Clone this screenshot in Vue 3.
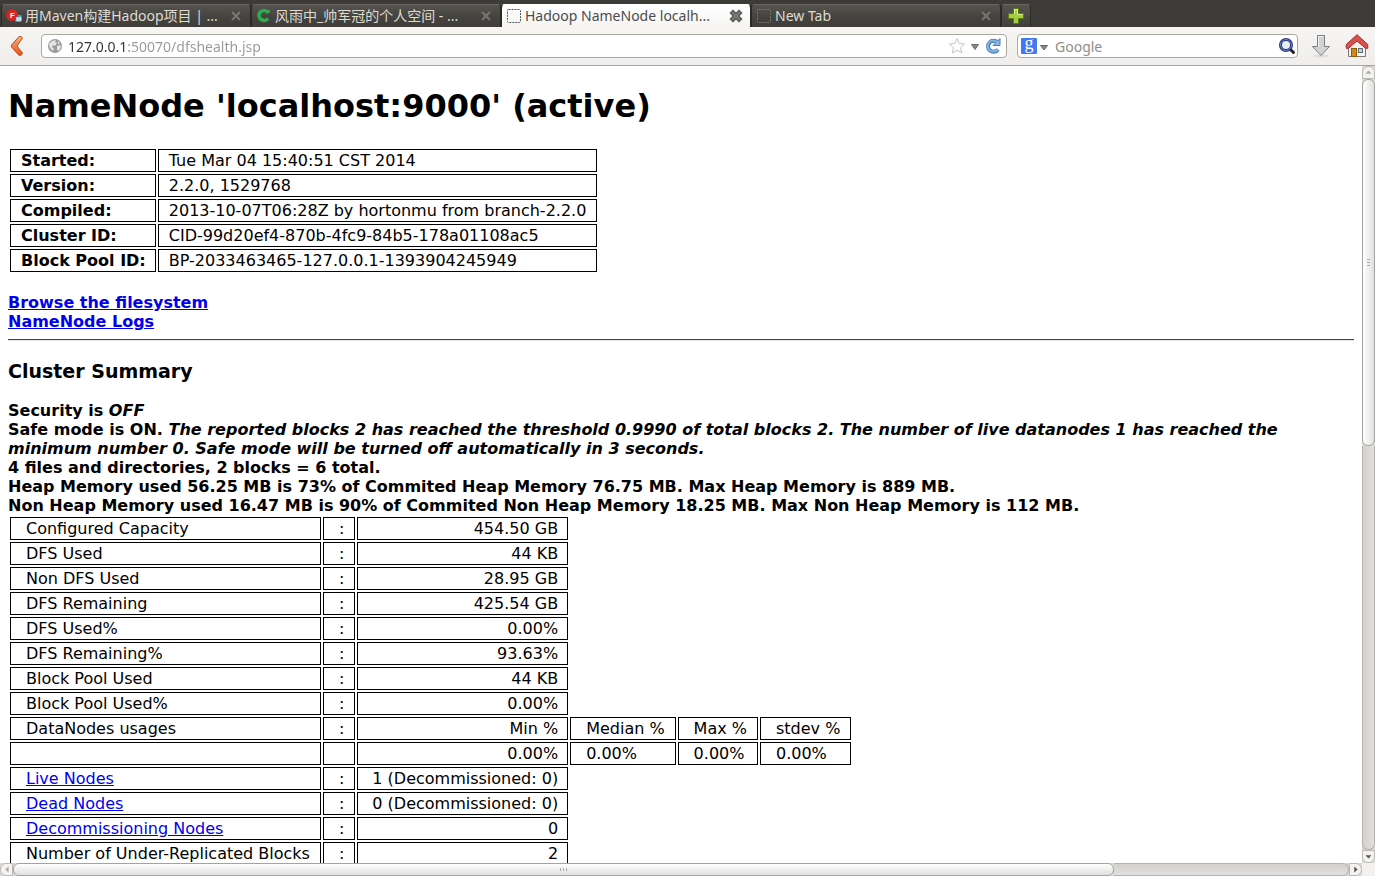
<script setup>
import { ref } from 'vue'

const tabs = [
  { title: '用Maven构建Hadoop项目 | ...', icon: 'fm' },
  { title: '风雨中_帅军冠的个人空间 - ...', icon: 'c' },
  { title: 'Hadoop NameNode localh...', icon: 'blank', active: true },
  { title: 'New Tab', icon: 'blank' }
]

const url = ref('127.0.0.1:50070/dfshealth.jsp')
const query = ref('')

const info = [
  ['Started:', 'Tue Mar 04 15:40:51 CST 2014'],
  ['Version:', '2.2.0, 1529768'],
  ['Compiled:', '2013-10-07T06:28Z by hortonmu from branch-2.2.0'],
  ['Cluster ID:', 'CID-99d20ef4-870b-4fc9-84b5-178a01108ac5'],
  ['Block Pool ID:', 'BP-2033463465-127.0.0.1-1393904245949']
]

const rows = [
  { name: 'Configured Capacity', sep: ':', value: '454.50 GB' },
  { name: 'DFS Used', sep: ':', value: '44 KB' },
  { name: 'Non DFS Used', sep: ':', value: '28.95 GB' },
  { name: 'DFS Remaining', sep: ':', value: '425.54 GB' },
  { name: 'DFS Used%', sep: ':', value: '0.00%' },
  { name: 'DFS Remaining%', sep: ':', value: '93.63%' },
  { name: 'Block Pool Used', sep: ':', value: '44 KB' },
  { name: 'Block Pool Used%', sep: ':', value: '0.00%' },
  { name: 'DataNodes usages', sep: ':', value: 'Min %', extra: ['Median %', 'Max %', 'stdev %'] },
  { name: '', sep: '', value: '0.00%', extra: ['0.00%', '0.00%', '0.00%'] },
  { name: 'Live Nodes', sep: ':', value: '1 (Decommissioned: 0)', link: true },
  { name: 'Dead Nodes', sep: ':', value: '0 (Decommissioned: 0)', link: true },
  { name: 'Decommissioning Nodes', sep: ':', value: '0', link: true },
  { name: 'Number of Under-Replicated Blocks', sep: ':', value: '2' }
]
</script>

<template>
  <div class="browser">
    <nav class="tabbar" aria-label="Tabs">
      <div v-for="tab in tabs" :key="tab.title" class="tab" :class="{ active: tab.active }">
        <svg v-if="tab.icon === 'fm'" class="favicon" viewBox="0 0 16 16" aria-hidden="true">
          <rect x="9" y="7" width="7" height="7" rx="2" fill="#4aa3d8" />
          <circle cx="6" cy="7" r="6" fill="#d3261c" />
          <text x="4" y="10" class="mark-f">F</text>
          <text x="10" y="13" class="mark-m">M</text>
        </svg>
        <svg v-else-if="tab.icon === 'c'" class="favicon" viewBox="0 0 16 16" aria-hidden="true">
          <path d="M12 4.500A5 5 0 1 0 12 10.500" fill="none" stroke="#2faa4e" stroke-width="3.600" />
          <path d="M10 6.200L14 4.500V2L11.500 2.500Z" fill="#2faa4e" />
        </svg>
        <svg v-else class="favicon" viewBox="0 0 16 16" aria-hidden="true">
          <rect x="1.5" y="1.5" width="13" height="13" rx="1" fill="none" :stroke="tab.active ? '#555' : '#77756f'" stroke-dasharray="2 1" />
        </svg>
        <button class="title" type="button">{{ tab.title }}</button>
        <button class="close" type="button" aria-label="Close tab">
          <svg viewBox="0 0 14 14" aria-hidden="true">
            <path v-if="tab.active" d="M4 4l6 6M10 4l-6 6" stroke="#4f4e4b" stroke-width="5" stroke-linecap="square" />
            <path v-if="tab.active" d="M4 4l6 6M10 4l-6 6" stroke="#777672" stroke-width="3" stroke-linecap="square" />
            <path v-else d="M3 3l8 8M11 3l-8 8" stroke="#777670" stroke-width="2" />
          </svg>
        </button>
      </div>
      <button class="newtab" type="button" aria-label="Open a new tab">
        <svg viewBox="0 0 16 16" aria-hidden="true">
          <path d="M5.5 .5h5v5h5v5h-5v5h-5v-5h-5v-5h5z" fill="#a5cc3c" stroke="#567f10" />
          <path d="M6.5 6.5v-5h3v5h5" fill="none" stroke="#d9ee8c" />
        </svg>
      </button>
    </nav>

    <header class="toolbar">
      <button class="tool back" type="button" aria-label="Back">
        <svg width="14" height="22" viewBox="0 0 14 22" aria-hidden="true">
          <defs>
            <linearGradient id="backFill" x1="0" y1="0" x2="0" y2="1">
              <stop offset="0" stop-color="#f8b27c" />
              <stop offset="1" stop-color="#e4511c" />
            </linearGradient>
          </defs>
          <path d="M9 1.5Q12 1 12.5 3L7 11L12.500 18Q12 21 9 20.500L1.500 12V10Z" fill="url(#backFill)" stroke="#c9501e" />
        </svg>
      </button>
      <div class="field address">
        <svg width="16" height="16" viewBox="0 0 16 16" aria-hidden="true">
          <circle cx="8" cy="8" r="7" fill="#999" />
          <path d="M2 6l3-3 4-1-1 2 2 1-2 3-2-1-1 2 2 2-1 2-3-3zM10 8l3-1 1 2-2 4-2-1zM11 3l2 2-2 1z" fill="#e6e6e6" />
        </svg>
        <input v-model="url" class="url" type="text" aria-label="Address" spellcheck="false" />
        <button class="bare" type="button" aria-label="Bookmark this page">
          <svg width="18" height="18" viewBox="0 0 18 18" aria-hidden="true">
            <path d="M9 1.500L11.200 6.500L16.500 7L12.500 10.700L13.700 16L9 13.200L4.300 16L5.500 10.700L1.500 7L6.800 6.500Z" fill="#fff" stroke="#c4c4c4" />
          </svg>
        </button>
        <button class="bare" type="button" aria-label="Show history">
          <svg width="18" height="18" viewBox="0 0 18 18" aria-hidden="true">
            <path d="M5.500 7.500h7L9 12.500z" fill="#888" stroke="#6a6a6a" />
          </svg>
        </button>
        <button class="bare" type="button" aria-label="Reload">
          <svg width="18" height="18" viewBox="0 0 18 18" aria-hidden="true">
            <path d="M13.500 5.500A5.500 5.500 0 1 0 14 12.500" fill="none" stroke="#4a7fb8" stroke-width="4" />
            <path d="M16 1.500V8.500H9Z" fill="#8db7e0" stroke="#4a7fb8" />
            <path d="M13.500 5.500A5.500 5.500 0 1 0 13.500 12.500" fill="none" stroke="#86b3df" stroke-width="2" />
          </svg>
        </button>
      </div>
      <form class="field search" @submit.prevent>
        <svg width="16" height="16" viewBox="0 0 16 16" aria-hidden="true">
          <rect width="16" height="16" rx="1" fill="#4277f5" />
          <text x="8" y="11" class="mark-g">g</text>
        </svg>
        <button class="engine" type="button" aria-label="Choose search engine">
          <svg width="10" height="16" viewBox="0 0 10 16" aria-hidden="true">
            <path d="M1.500 7.500h7L5 12z" fill="#888" stroke="#666" />
          </svg>
        </button>
        <input v-model="query" class="query" type="text" placeholder="Google" aria-label="Search" />
        <button class="bare" type="submit" aria-label="Search">
          <svg width="18" height="18" viewBox="0 0 18 18" aria-hidden="true">
            <path d="M12.500 12.500l3 3" stroke="#222" stroke-width="3" stroke-linecap="round" />
            <circle cx="8" cy="8" r="5.500" fill="#e8edf6" stroke="#26357a" stroke-width="3" />
            <circle cx="8" cy="8" r="5.500" fill="none" stroke="#6a82c8" />
          </svg>
        </button>
      </form>
      <button class="tool" type="button" aria-label="Downloads">
        <svg width="20" height="24" viewBox="0 0 20 24" aria-hidden="true">
          <ellipse cx="10" cy="22" rx="8" ry="1.500" fill="#dedddb" />
          <path d="M6.500 1.500h7v11h5L10 21.500L1.500 12.500h5z" fill="#cfd3d4" stroke="#7d807f" />
          <path d="M7.500 13V2.500h5" fill="none" stroke="#f1f3f3" />
        </svg>
      </button>
      <button class="tool" type="button" aria-label="Home">
        <svg width="24" height="24" viewBox="0 0 24 24" aria-hidden="true">
          <path d="M3.500 12L12 4.500L20.500 12V22.500H3.500Z" fill="#f3f2ef" stroke="#777" />
          <rect x="6.500" y="14.500" width="5" height="8" fill="#d18a1c" stroke="#8f5a08" />
          <rect x="13.500" y="14.500" width="4" height="4" fill="#bfd3dc" stroke="#5e7076" />
          <path d="M12 .700L22.800 10.500V14.300H20.500L12 7L3.500 14.300H1.200V10.500Z" fill="#d75050" stroke="#a92d2d" />
        </svg>
      </button>
    </header>

    <div class="viewport">
      <main class="page">
        <h1>NameNode 'localhost:9000' (active)</h1>
        <table class="info">
          <tbody>
            <tr v-for="row in info" :key="row[0]">
              <th scope="row">{{ row[0] }}</th>
              <td>{{ row[1] }}</td>
            </tr>
          </tbody>
        </table>
        <div class="links">
          <a href="#browse">Browse the filesystem</a><br />
          <a href="#logs">NameNode Logs</a>
        </div>
        <hr />
        <h3>Cluster Summary</h3>
        <div class="summary">
          Security is <em>OFF</em><br />
          Safe mode is ON. <em>The reported blocks 2 has reached the threshold 0.9990 of total blocks 2. The number of live datanodes 1 has reached the minimum number 0. Safe mode will be turned off automatically in 3 seconds.</em><br />
          4 files and directories, 2 blocks = 6 total.<br />
          Heap Memory used 56.25 MB is 73% of Commited Heap Memory 76.75 MB. Max Heap Memory is 889 MB.<br />
          Non Heap Memory used 16.47 MB is 90% of Commited Non Heap Memory 18.25 MB. Max Non Heap Memory is 112 MB.
        </div>
        <table class="stats">
          <tbody>
            <tr v-for="(row, i) in rows" :key="i">
              <td><a v-if="row.link" href="#nodes">{{ row.name }}</a><template v-else>{{ row.name }}</template></td>
              <td>{{ row.sep }}</td>
              <td class="value">{{ row.value }}</td>
              <td v-for="(cell, j) in row.extra || []" :key="j">{{ cell }}</td>
            </tr>
          </tbody>
        </table>
      </main>

      <div class="bar vertical" aria-hidden="true">
        <span class="arrow"><svg viewBox="0 0 13 13"><path d="M3 8h7L6.500 4z" fill="#aaa" /></svg></span>
        <span class="thumb"><i></i><i></i><i></i></span>
        <span class="rest"></span>
        <span class="arrow"><svg viewBox="0 0 13 13"><path d="M3 5h7L6.500 9z" fill="#555" /></svg></span>
      </div>
      <div class="bar horizontal" aria-hidden="true">
        <span class="arrow"><svg viewBox="0 0 13 13"><path d="M9 3v7L5 6.500z" fill="#aaa" /></svg></span>
        <span class="thumb"><i></i><i></i><i></i></span>
        <span class="rest"></span>
        <span class="arrow"><svg viewBox="0 0 13 13"><path d="M5 3v7L9 6.500z" fill="#555" /></svg></span>
      </div>
    </div>
  </div>
</template>

<style>
body {
  margin: 0;
  overflow: hidden;
}
</style>

<style scoped>
.browser {
  display: flex;
  flex-direction: column;
  height: 100vh;
  background: #fff;
  font-family: "Noto Sans", "Noto Sans CJK SC", sans-serif;
  font-size: 14px;
}
button {
  border: 0;
  padding: 0;
  background: none;
  font: inherit;
  color: inherit;
}
svg {
  display: block;
  flex: none;
}

.tabbar {
  display: flex;
  align-items: flex-end;
  box-sizing: border-box;
  height: 27px;
  flex: none;
  padding-left: 1px;
  background: #3c3b37;
}
.tab {
  display: flex;
  align-items: center;
  box-sizing: border-box;
  flex: 0 1 250px;
  min-width: 0;
  height: 23px;
  padding: 0 7px 0 4px;
  border: 1px solid #2b2a27;
  border-top-color: #686762;
  border-bottom: 0;
  border-radius: 4px 4px 0 0;
  background: linear-gradient(#55544f, #454440 50%, #3f3e3a);
  color: #dfdbd2;
}
.tab.active {
  background: linear-gradient(#fff, #f5f4f3);
  border-top-color: #fff;
  color: #4c4c4c;
}
.favicon {
  width: 16px;
  height: 16px;
}
.mark-f {
  font: bold 8px "Liberation Sans", sans-serif;
  fill: #fff;
}
.mark-m {
  font: bold 6px "Liberation Sans", sans-serif;
  fill: #fff;
}
.mark-g {
  font: 18px "Liberation Serif", serif;
  fill: #fff;
  text-anchor: middle;
}
.title {
  flex: 1;
  min-width: 0;
  margin-left: 3px;
  overflow: hidden;
  white-space: nowrap;
  text-align: left;
  line-height: 22px;
}
.close,
.close svg {
  width: 14px;
  height: 14px;
}
.newtab {
  display: grid;
  place-items: center;
  width: 30px;
  height: 23px;
  border: 1px solid #2b2a27;
  border-top-color: #686762;
  border-bottom: 0;
  border-radius: 4px 4px 0 0;
  background: linear-gradient(#55544f, #3f3e3a);
}
.newtab svg {
  width: 16px;
  height: 16px;
}

.toolbar {
  display: flex;
  align-items: center;
  box-sizing: border-box;
  flex: none;
  height: 39px;
  border-bottom: 1px solid #a9a8a0;
  background: linear-gradient(#f6f5f4, #efeeec);
}
.tool {
  display: grid;
  place-items: center;
  width: 36px;
  height: 38px;
}
.back {
  width: 41px;
  padding-right: 8px;
}
.field {
  display: flex;
  align-items: center;
  box-sizing: border-box;
  height: 24px;
  border: 1px solid #a9a99f;
  border-radius: 4px;
  background: #fff;
}
.field svg {
  overflow: visible;
}
.address {
  flex: 1;
  padding: 0 4px 0 5px;
  margin-right: 10px;
}
.search {
  flex: 0 1 281px;
  padding: 0 1px 0 3px;
  margin-right: 5px;
}
.url,
.query {
  flex: 1;
  min-width: 0;
  padding: 0;
  border: 0;
  outline: 0;
  background: none;
  font: inherit;
  color: #333;
}
.url {
  margin-left: 5px;
  background: linear-gradient(90deg, #333 59px, #999 59px);
  background-clip: text;
  color: transparent;
}
.engine {
  margin: 0 6px 0 2px;
}
.query::placeholder {
  color: #8e8e8e;
  opacity: 1;
}

.viewport {
  display: grid;
  grid-template-columns: minmax(0, 1fr) 13px;
  grid-template-rows: minmax(0, 1fr) 13px;
  flex: 1;
  min-height: 0;
  background: #f2f1f0;
}
.page {
  overflow: hidden;
  padding: 0 8px;
  background: #fff;
  color: #000;
  font: 16px/19px "DejaVu Sans", sans-serif;
}
h1 {
  margin: 21px 0;
  font-size: 32px;
  line-height: 39px;
}
h3 {
  margin: 19px 0;
  font-size: 19px;
  line-height: 22px;
}
table {
  border-spacing: 2px;
  white-space: nowrap;
}
th,
td {
  height: 19px;
  border: 1px solid #000;
  padding: 1px 10px;
  text-align: left;
}
th {
  padding-right: 9px;
}
.stats td {
  padding-left: 15px;
}
.stats .value {
  padding: 1px 9px 1px 14px;
  text-align: right;
}
a {
  color: #00e;
}
.links {
  margin-top: 19px;
  font-weight: bold;
}
hr {
  height: 1px;
  margin: 8px 0 0;
  border: 0;
  border-bottom: 1px solid #e4e4e4;
  background: #444;
}
.summary {
  font-weight: bold;
}

.bar {
  display: flex;
  background: #dbd9d6;
}
.vertical {
  flex-direction: column;
}
.arrow,
.thumb {
  box-sizing: border-box;
  border: 1px solid #a5a3a0;
  background: #f4f3f2;
}
.arrow {
  width: 13px;
  height: 13px;
  flex: none;
  border-color: #bbb9b6;
}
.arrow svg {
  width: 11px;
  height: 11px;
}
.thumb {
  display: flex;
  align-items: center;
  justify-content: center;
  gap: 2px;
  border-radius: 6px;
}
.thumb i {
  background: #aaa;
}
.vertical .thumb {
  flex: 366;
  flex-direction: column;
  background: linear-gradient(90deg, #fff, #e2e0de);
}
.vertical .thumb i {
  width: 3px;
  height: 1px;
}
.vertical .rest {
  flex: 404;
  box-sizing: border-box;
  border: 1px solid #b5b3b0;
  border-width: 0 1px 1px;
  border-radius: 0 0 6px 6px;
  background: linear-gradient(90deg, #d3d1ce, #e2e0de);
}
.vertical .arrow:first-child {
  border-radius: 6px 6px 0 0;
}
.vertical .arrow:last-child {
  border-radius: 0 0 6px 6px;
}
.horizontal .thumb {
  flex: 1101;
  background: linear-gradient(#fff, #e2e0de);
}
.horizontal .thumb i {
  width: 1px;
  height: 3px;
}
.horizontal .rest {
  flex: 235;
  box-sizing: border-box;
  border: 1px solid #b5b3b0;
  border-width: 1px 1px 1px 0;
  border-radius: 0 6px 6px 0;
  background: linear-gradient(#d3d1ce, #e2e0de);
}
.horizontal .arrow:first-child {
  border-radius: 6px 0 0 6px;
}
.horizontal .arrow:last-child {
  border-radius: 0 6px 6px 0;
}
</style>
